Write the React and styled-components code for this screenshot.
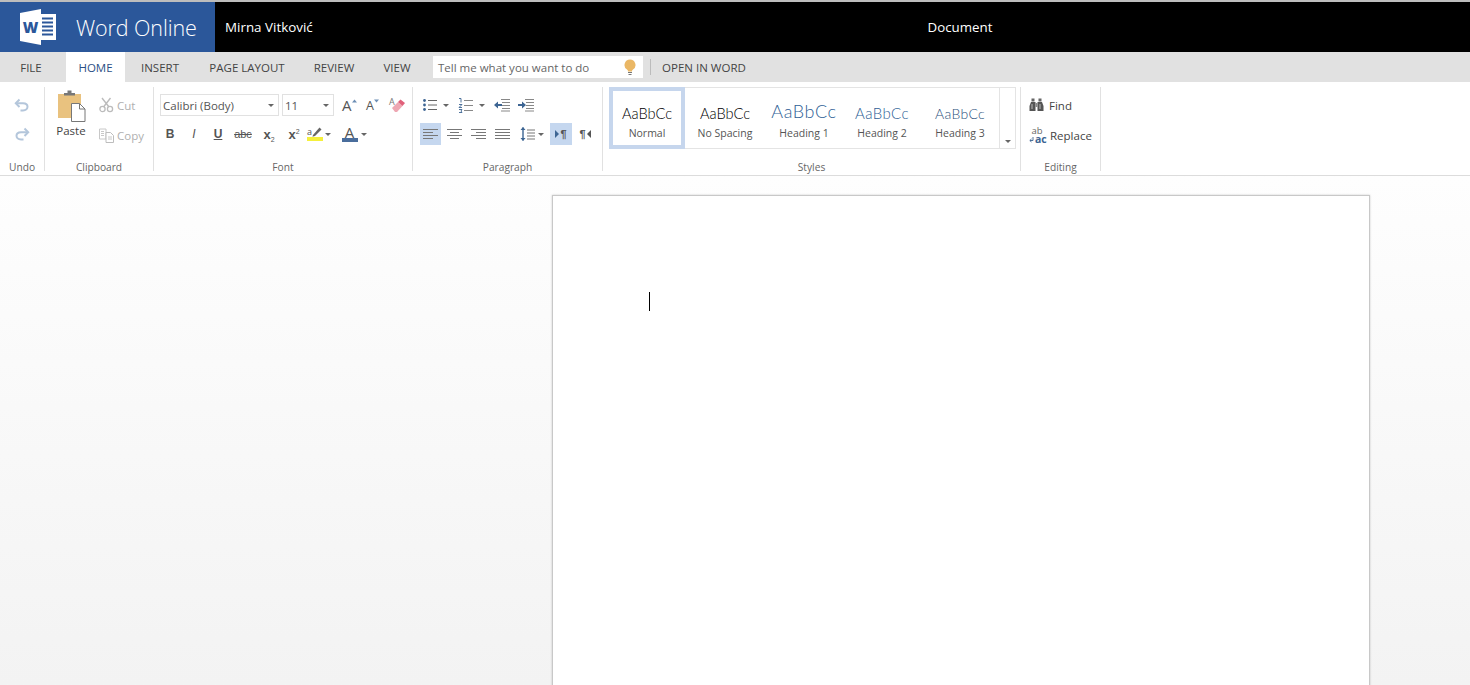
import React from 'react';
import styled, { createGlobalStyle } from 'styled-components';

const GlobalStyle = createGlobalStyle`
  html, body { margin: 0; padding: 0; height: 100%; overflow: hidden; background: #fff; }
  body { font-family: "Open Sans", "Liberation Sans", sans-serif; }
  * { box-sizing: border-box; }
`;

const Shell = styled.div`
  display: flex;
  flex-direction: column;
  height: 685px;
  overflow: hidden;
`;

/* top black bar */
const Header = styled.header`
  display: flex;
  align-items: center;
  height: 52px;
  background: #000;
  border-top: 2px solid #bdbdbd;
  color: #fff;
`;
const Brand = styled.div`
  display: flex;
  align-items: center;
  gap: 20px;
  width: 215px;
  height: 100%;
  padding-left: 20px;
  background: #2b579a;
`;
const BrandName = styled.span`
  font-size: 21.5px;
  font-weight: 300;
  white-space: nowrap;
  letter-spacing: -0.1px;
`;
const UserName = styled.div`
  width: 530px;
  padding-left: 10px;
  font-size: 13.4px;
  font-weight: 500;
`;
const DocTitle = styled.div`
  width: 430px;
  text-align: center;
  font-size: 13.3px;
  font-weight: 500;
`;

/* tab strip */
const TabBar = styled.nav`
  display: flex;
  align-items: stretch;
  height: 30px;
  background: #e1e1e1;
  font-size: 11.5px;
  color: #444;
`;
const Tab = styled.div`
  display: flex;
  align-items: center;
  justify-content: center;
  width: ${p => p.$w}px;
  margin-left: ${p => p.$ml || 0}px;
  background: ${p => (p.$active ? '#fff' : 'transparent')};
  color: ${p => (p.$active ? '#2b4f85' : '#444')};
  white-space: nowrap;
`;
const TellMe = styled.div`
  display: flex;
  align-items: center;
  justify-content: space-between;
  align-self: center;
  width: 210px;
  height: 22px;
  margin-left: 8px;
  padding: 0 7px 0 5px;
  background: #fff;
  color: #666;
  font-size: 11.5px;
`;
const TabDivider = styled.div`
  align-self: center;
  width: 1px;
  height: 16px;
  margin: 0 10px 0 7px;
  background: #bcbcbc;
`;

/* ribbon */
const Ribbon = styled.section`
  display: flex;
  height: 94px;
  padding-top: 5px;
  background: #fff;
  border-bottom: 1px solid #dcdcdc;
`;
const Group = styled.div`
  display: flex;
  flex-direction: column;
  width: ${p => p.$w}px;
  height: 84px;
  border-right: 1px solid #e1e1e1;
`;
const GroupBody = styled.div`
  flex: 1;
  display: flex;
  flex-direction: ${p => p.$dir || 'column'};
  padding: ${p => p.$pad || '0'};
  min-height: 0;
`;
const GroupLabel = styled.div`
  height: 14px;
  margin-bottom: -4px;
  line-height: 12px;
  text-align: center;
  font-size: 10.2px;
  color: #666;
`;
const IconRow = styled.div`
  display: flex;
  align-items: center;
  height: 22px;
  margin-top: ${p => p.$mt || 0}px;
  padding-left: ${p => p.$pl || 0}px;
`;
const IconBtn = styled.div`
  display: flex;
  align-items: center;
  justify-content: center;
  gap: ${p => p.$gap || 0}px;
  flex: none;
  width: ${p => p.$w || 24}px;
  height: 22px;
  background: ${p => (p.$on ? '#c5d7ef' : 'transparent')};
`;
const Caret = styled.span`
  flex: none;
  width: 0;
  height: 0;
  border-left: 3px solid transparent;
  border-right: 3px solid transparent;
  border-top: 3px solid #666;
`;

/* undo */
const UndoStack = styled.div`
  display: flex;
  flex-direction: column;
  align-items: center;
  gap: 15px;
  padding-top: 11px;
`;

/* clipboard */
const PasteButton = styled.div`
  display: flex;
  flex-direction: column;
  align-items: center;
  width: 42px;
  margin-left: 5px;
  padding-top: 3px;
  font-size: 11.5px;
  color: #444;
  line-height: 16px;
  gap: 1px;
`;
const SmallActions = styled.div`
  display: flex;
  flex-direction: column;
  gap: 8px;
  margin-left: 7px;
  padding-top: 7px;
`;
const SmallAction = styled.div`
  display: flex;
  align-items: center;
  gap: ${p => p.$gap || 3}px;
  height: 22px;
  font-size: 11.5px;
  color: ${p => (p.$off ? '#b0b0b0' : '#444')};
`;

/* font */
const Combo = styled.div`
  display: flex;
  align-items: center;
  justify-content: space-between;
  width: ${p => p.$w}px;
  height: 22px;
  margin-right: 3px;
  padding: 0 4px 0 2px;
  border: 1px solid #e1e1e1;
  font-size: 11.5px;
  color: #555;
`;
const FormatLetter = styled.span`
  font-family: ${p => (p.$thin ? '"Open Sans"' : '"Liberation Sans"')}, sans-serif;
  font-size: ${p => p.$size || 12}px;
  font-weight: ${p => p.$weight || 700};
  font-style: ${p => (p.$italic ? 'italic' : 'normal')};
  text-decoration: ${p => p.$deco || 'none'};
  color: ${p => p.$color || '#555'};
  line-height: ${p => p.$lh || 1};
  white-space: nowrap;
`;
const Script = styled.span`
  font-size: 7px;
  font-weight: 400;
  color: #555;
  position: relative;
  top: ${p => p.$top}px;
`;
const GlyphStack = styled.div`
  display: flex;
  flex-direction: ${p => p.$dir || 'column'};
  align-items: ${p => p.$align || 'center'};
  flex: none;
  width: ${p => p.$w || 16}px;
  gap: ${p => p.$gap || 0}px;
`;
const ColorBar = styled.div`
  width: 16px;
  height: 4px;
  background: ${p => p.$color};
`;
const EraserWrap = styled.div`
  position: relative;
  width: 16px;
  height: 16px;
`;
const EraserLetter = styled.span`
  position: absolute;
  left: 0;
  top: 0;
  font-size: 9px;
  line-height: 9px;
  color: #777;
`;

/* styles gallery */
const Gallery = styled.div`
  display: flex;
  width: 407px;
  height: 62px;
  margin-left: 6px;
  border: 1px solid #e4e4e4;
  border-left: none;
`;
const StyleItem = styled.div`
  display: flex;
  flex-direction: column;
  align-items: center;
  flex: none;
  width: ${p => p.$w || 78}px;
  height: ${p => (p.$selected ? 62 : 60)}px;
  margin-top: ${p => (p.$selected ? -1 : 0)}px;
  padding-top: ${p => (p.$selected ? 11 : 14)}px;
  border: ${p => (p.$selected ? '4px solid #c6d6ed' : 'none')};
`;
const StyleSample = styled.div`
  height: 24px;
  line-height: 24px;
  font-family: Lato, "Open Sans", sans-serif;
  font-size: ${p => p.$size || 14.6}px;
  font-weight: 300;
  color: ${p => p.$color || '#000'};
  letter-spacing: ${p => p.$track || 0}px;
  white-space: nowrap;
  margin-top: ${p => p.$mt || 0}px;
`;
const StyleName = styled.div`
  font-size: 10.5px;
  line-height: 14px;
  color: #555;
  margin-top: ${p => p.$mt || 0}px;
  white-space: nowrap;
`;
const GalleryScroll = styled.div`
  display: flex;
  align-items: flex-end;
  justify-content: center;
  flex: 1;
  padding-bottom: 5px;
  border-left: 1px solid #e4e4e4;
`;

/* editing */
const EditList = styled.div`
  display: flex;
  flex-direction: column;
  gap: 8px;
  padding: 7px 0 0 8px;
`;

/* document area */
const Canvas = styled.main`
  flex: 1;
  min-height: 0;
  overflow: hidden;
  padding: 19px 0 0 552px;
  background: linear-gradient(#fefefe, #f3f3f3);
`;
const Page = styled.div`
  width: 818px;
  height: 700px;
  padding: 96px 0 0 96px;
  background: #fff;
  border: 1px solid #c8c8c8;
  box-shadow: 0 0 2px rgba(0, 0, 0, 0.2);
`;
const TextCaret = styled.div`
  width: 1px;
  height: 19px;
  background: #000;
`;

/* icons */
const Svg = ({ w = 16, h = 16, children }) => (
  <svg width={w} height={h} viewBox={`0 0 ${w} ${h}`} fill="none" style={{ display: 'block', flex: 'none' }}>{children}</svg>
);

const WordLogo = () => (
  <svg width="36" height="36" viewBox="0 0 36 36" style={{ display: 'block', flex: 'none' }}>
    <path d="M0 4 L21 0 V36 L0 32 Z" fill="#fff" />
    <rect x="21" y="5" width="15" height="26" fill="#fff" />
    <path d="M22 9.500h11M22 13.500h11M22 17.500h11M22 21.500h11M22 25.500h11" stroke="#2b579a" strokeWidth="1.8" />
    <text x="10.5" y="24" textAnchor="middle" fontFamily="Open Sans, sans-serif" fontWeight="800" fontSize="15" fill="#2b579a">W</text>
  </svg>
);
const Bulb = () => (
  <Svg w={12} h={17}>
    <path d="M6 .5a5.500 5.500 0 0 0-3 10.100c.7.5 1 1 1 1.900h4c0-.9.3-1.400 1-1.900A5.500 5.500 0 0 0 6 .5z" fill="#eab765" />
    <path d="M4 13.500h4M4.500 15.500h3" stroke="#777" strokeWidth="1.2" />
  </Svg>
);
const UndoIcon = ({ flip }) => (
  <svg width="16" height="14" viewBox="0 0 16 14" fill="none" style={{ display: 'block', transform: flip ? 'scaleX(-1)' : 'none' }}>
    <path d="M5.500 1.500 1.800 5.200 5.500 9" stroke="#b4c6db" strokeWidth="2" />
    <path d="M2.500 5.200H9c6 0 6 7.300 0 7.300H6.500" stroke="#b4c6db" strokeWidth="2" />
  </svg>
);
const PasteIcon = () => (
  <Svg w={29} h={32}>
    <rect x="1" y="4" width="23" height="24" fill="#e9c27f" />
    <path d="M7 5V3h3.500V.5h4V3H18v2.500H7z" fill="#777" />
    <path d="M14.500 13.500h8l5.500 5.500v12.500H14.500z" fill="#fff" stroke="#777" />
    <path d="M22.500 13.500V19H28" stroke="#777" />
  </Svg>
);
const CutIcon = () => (
  <Svg w={15} h={16}>
    <path d="M3 1l7 9M11.500 1l-7 9" stroke="#bcbcbc" strokeWidth="1.4" />
    <circle cx="3.500" cy="12" r="2.600" stroke="#bcbcbc" strokeWidth="1.3" />
    <circle cx="11" cy="12" r="2.600" stroke="#bcbcbc" strokeWidth="1.3" />
  </Svg>
);
const CopyIcon = () => (
  <Svg w={15} h={15}>
    <path d="M.5 1h6.500v10H.5zM2 3.500h3M2 5.500h3M2 7.500h3" stroke="#c8c8c8" />
    <path d="M7 4.500h4.500l3 3v7H7z" fill="#fff" stroke="#bdbdbd" />
    <path d="M9 9h4M9 11h4" stroke="#c8c8c8" />
  </Svg>
);
const GrowFont = ({ grow }) => (
  <GlyphStack $dir="row" $align="flex-end" $w={14} $gap={0}>
    <FormatLetter $thin $weight={400} $size={grow ? 15 : 12.5} $lh={grow ? '14px' : '12px'}>A</FormatLetter>
    <Svg w={5} h={13}>
      <path d={grow ? 'M0 3.500L2.500 0.500 5 3.500z' : 'M0 0.500L2.500 3.500 5 .5z'} fill="#6d8fb5" />
    </Svg>
  </GlyphStack>
);
const Eraser = () => (
  <EraserWrap>
    <EraserLetter>A</EraserLetter>
    <Svg w={16} h={16}>
      <path d="M3 11l6-6 4.500 4-5.500 6H6z" fill="#eea7b3" />
      <path d="M9 5l2.500-2.500L16 6l-2.500 3z" fill="#e0607a" />
    </Svg>
  </EraserWrap>
);
const HighlightIcon = () => (
  <GlyphStack>
    <GlyphStack $dir="row" $align="flex-end" $w={16}>
      <FormatLetter $thin $weight={400} $size={9} $lh="10px">a</FormatLetter>
      <Svg w={10} h={10}>
        <path d="M1 8l6.500-7.500 2 2L3 9 .5 9.800z" fill="#666" />
      </Svg>
    </GlyphStack>
    <ColorBar $color="#f5f03b" />
  </GlyphStack>
);
const FontColorIcon = () => (
  <GlyphStack>
    <FormatLetter $thin $weight={400} $size={15} $lh="11px">A</FormatLetter>
    <ColorBar $color="#4a6d9c" />
  </GlyphStack>
);
const BulletsIcon = () => (
  <Svg w={14} h={14}>
    <path d="M5 2.500h9M5 7h9M5 11.500h9" stroke="#666" />
    <circle cx="1.500" cy="2.500" r="1.400" fill="#3d6593" />
    <circle cx="1.500" cy="7" r="1.400" fill="#3d6593" />
    <circle cx="1.500" cy="11.500" r="1.400" fill="#3d6593" />
  </Svg>
);
const NumbersIcon = () => (
  <Svg w={15} h={15}>
    <path d="M6 2.500h9M6 7.500h9M6 12.500h9" stroke="#888" />
    <path d="M1 .5h2v4M1 6.500h3L1 9.500h3M1 11.500h3l-1 1.500 1 1.500H1" stroke="#3d6593" strokeWidth=".9" />
  </Svg>
);
const IndentIcon = ({ out }) => (
  <Svg w={16} h={14}>
    <path d="M7 1.500h9M8 4.500h8M8 7.500h8M8 10.500h8M7 13h9" stroke="#888" />
    {out
      ? <path d="M0 7l4-3.500V6h4v2H4v2.500z" fill="#3d6593" />
      : <path d="M8 7L4 3.500V6H0v2h4v2.500z" fill="#3d6593" />}
  </Svg>
);
const AlignIcon = ({ rows }) => (
  <Svg w={15} h={12}>
    {rows.map((r, i) => (
      <path key={i} d={`M${r[0]} ${1.5 + i * 3}H${r[1]}`} stroke="#777" />
    ))}
  </Svg>
);
const LineSpacing = () => (
  <Svg w={15} h={16}>
    <path d="M3 1.500v13" stroke="#3d6593" strokeWidth="1.4" />
    <path d="M.5 4L3 1l2.500 3zM.5 12L3 15l2.500-3z" fill="#3d6593" />
    <path d="M7 4h8M7 7h8M7 10h8M7 13h8" stroke="#777" />
  </Svg>
);
const DirTriangle = ({ left }) => (
  <Svg w={4} h={8}>
    <path d={left ? 'M4 0L0 4l4 4z' : 'M0 0l4 4-4 4z'} fill={left ? '#555' : '#3d6593'} />
  </Svg>
);
const Binoculars = () => (
  <Svg w={15} h={14}>
    <path d="M2.500.5h3v3h-3zM9.500.5h3v3h-3z" fill="#666" />
    <path d="M2 4h4.500v9H.5V8zM8.500 4H13l1.500 4v5h-6z" fill="#555" />
    <path d="M3 6v5M11 6v5" stroke="#bbb" />
    <rect x="6.500" y="5" width="2" height="4" fill="#888" />
  </Svg>
);
const ReplaceIcon = () => (
  <GlyphStack $align="flex-start" $w={17}>
    <FormatLetter $thin $weight={400} $size={9.5} $lh="9px" $color="#666">{'\u00a0ab'}</FormatLetter>
    <GlyphStack $dir="row" $w={17} $gap={1}>
      <Svg w={5} h={8}>
        <path d="M4 1v3.500H1M2.500 3L.8 4.500 2.500 6" stroke="#3d6593" strokeWidth=".9" />
      </Svg>
      <FormatLetter $thin $weight={700} $size={10.5} $lh="9px" $color="#3d6593">ac</FormatLetter>
    </GlyphStack>
  </GlyphStack>
);

const tabs = [
  { label: 'FILE', w: 62 },
  { label: 'HOME', w: 59, ml: 4, active: true },
  { label: 'INSERT', w: 70 },
  { label: 'PAGE LAYOUT', w: 104 },
  { label: 'REVIEW', w: 70 },
  { label: 'VIEW', w: 56 },
];

const gallery = [
  { name: 'Normal', selected: true, w: 76 },
  { name: 'No Spacing', w: 80 },
  { name: 'Heading 1', size: 18, color: '#2f5f96', track: 0.6, sampleTop: -3, nameTop: 3 },
  { name: 'Heading 2', size: 15, color: '#2f5f96', track: 0.4, sampleTop: -1, nameTop: 1 },
  { name: 'Heading 3', size: 14, color: '#2b4f7c', track: 0.3 },
];

export default function App() {
  return (
    <Shell>
      <GlobalStyle />
      <Header>
        <Brand>
          <WordLogo />
          <BrandName>Word Online</BrandName>
        </Brand>
        <UserName>Mirna Vitković</UserName>
        <DocTitle>Document</DocTitle>
      </Header>

      <TabBar>
        {tabs.map(t => (
          <Tab key={t.label} $w={t.w} $ml={t.ml} $active={t.active}>{t.label}</Tab>
        ))}
        <TellMe>
          Tell me what you want to do
          <Bulb />
        </TellMe>
        <TabDivider />
        <Tab $w={86}>OPEN IN WORD</Tab>
      </TabBar>

      <Ribbon>
        <Group $w={45}>
          <GroupBody>
            <UndoStack>
              <UndoIcon />
              <UndoIcon flip />
            </UndoStack>
          </GroupBody>
          <GroupLabel>Undo</GroupLabel>
        </Group>

        <Group $w={109}>
          <GroupBody $dir="row">
            <PasteButton>
              <PasteIcon />
              Paste
            </PasteButton>
            <SmallActions>
              <SmallAction $off><CutIcon />Cut</SmallAction>
              <SmallAction $off><CopyIcon />Copy</SmallAction>
            </SmallActions>
          </GroupBody>
          <GroupLabel>Clipboard</GroupLabel>
        </Group>

        <Group $w={259}>
          <GroupBody $pad="7px 0 0 4px">
            <IconRow $pl={2}>
              <Combo $w={119}>Calibri (Body)<Caret /></Combo>
              <Combo $w={52}>11<Caret /></Combo>
              <IconBtn><GrowFont grow /></IconBtn>
              <IconBtn><GrowFont /></IconBtn>
              <IconBtn><Eraser /></IconBtn>
            </IconRow>
            <IconRow $mt={7}>
              <IconBtn><FormatLetter $size={12}>B</FormatLetter></IconBtn>
              <IconBtn><FormatLetter $size={12} $italic $weight={400}>I</FormatLetter></IconBtn>
              <IconBtn><FormatLetter $size={12} $deco="underline">U</FormatLetter></IconBtn>
              <IconBtn $w={26}><FormatLetter $size={11} $weight={400} $deco="line-through">abc</FormatLetter></IconBtn>
              <IconBtn $w={26}><FormatLetter $size={13}>x<Script $top={3}>2</Script></FormatLetter></IconBtn>
              <IconBtn><FormatLetter $size={13}>x<Script $top={-5}>2</Script></FormatLetter></IconBtn>
              <IconBtn $w={26} $gap={2}><HighlightIcon /><Caret /></IconBtn>
              <IconBtn $w={44} $gap={3}><FontColorIcon /><Caret /></IconBtn>
            </IconRow>
          </GroupBody>
          <GroupLabel>Font</GroupLabel>
        </Group>

        <Group $w={190}>
          <GroupBody $pad="7px 0 0 7px">
            <IconRow>
              <IconBtn $w={32} $gap={6}><BulletsIcon /><Caret /></IconBtn>
              <IconBtn $w={38} $gap={6}><NumbersIcon /><Caret /></IconBtn>
              <IconBtn $w={23}><IndentIcon out /></IconBtn>
              <IconBtn $w={26}><IndentIcon /></IconBtn>
            </IconRow>
            <IconRow $mt={7}>
              <IconBtn $w={21} $on><AlignIcon rows={[[0, 15], [0, 10], [0, 15], [0, 10]]} /></IconBtn>
              <IconBtn $w={1} />
              <IconBtn $w={24}><AlignIcon rows={[[0, 15], [3, 12], [0, 15], [3, 12]]} /></IconBtn>
              <IconBtn $w={24}><AlignIcon rows={[[0, 15], [5, 15], [0, 15], [5, 15]]} /></IconBtn>
              <IconBtn $w={24}><AlignIcon rows={[[0, 15], [0, 15], [0, 15], [0, 15]]} /></IconBtn>
              <IconBtn $w={36} $gap={3}><LineSpacing /><Caret /></IconBtn>
              <IconBtn $w={22} $on $gap={1}><DirTriangle /><FormatLetter $size={11}>¶</FormatLetter></IconBtn>
              <IconBtn $w={26} $gap={1}><FormatLetter $size={11}>¶</FormatLetter><DirTriangle left /></IconBtn>
            </IconRow>
          </GroupBody>
          <GroupLabel>Paragraph</GroupLabel>
        </Group>

        <Group $w={418}>
          <GroupBody>
            <Gallery>
              {gallery.map(s => (
                <StyleItem key={s.name} $selected={s.selected} $w={s.w}>
                  <StyleSample $size={s.size} $color={s.color} $track={s.track} $mt={s.sampleTop}>AaBbCc</StyleSample>
                  <StyleName $mt={s.nameTop}>{s.name}</StyleName>
                </StyleItem>
              ))}
              <GalleryScroll><Caret /></GalleryScroll>
            </Gallery>
          </GroupBody>
          <GroupLabel>Styles</GroupLabel>
        </Group>

        <Group $w={80}>
          <GroupBody>
            <EditList>
              <SmallAction $gap={5}><Binoculars />Find</SmallAction>
              <SmallAction $gap={4}><ReplaceIcon />Replace</SmallAction>
            </EditList>
          </GroupBody>
          <GroupLabel>Editing</GroupLabel>
        </Group>
      </Ribbon>

      <Canvas>
        <Page>
          <TextCaret />
        </Page>
      </Canvas>
    </Shell>
  );
}
